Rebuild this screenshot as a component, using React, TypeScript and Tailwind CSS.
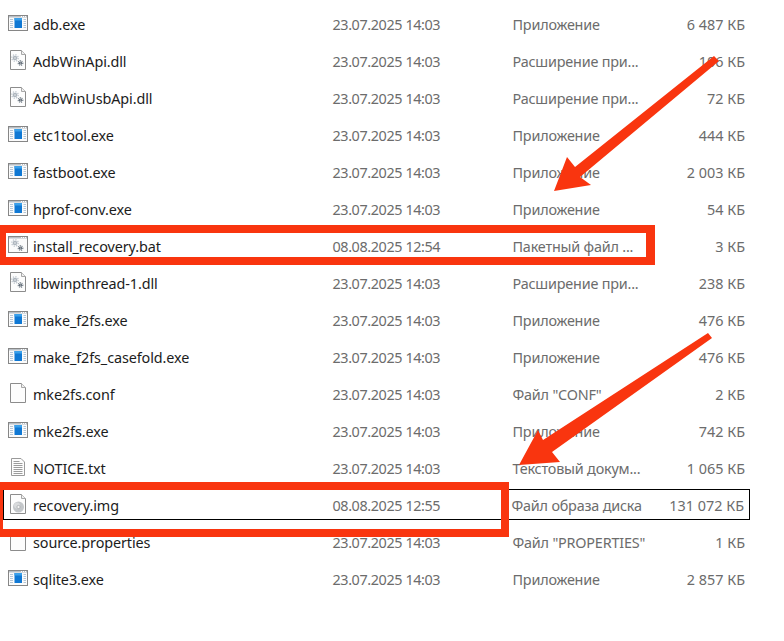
type Kind = "exe" | "dll" | "bat" | "conf" | "txt" | "img";
type Row = { name: string; date: string; type: string; size: string; icon: Kind; selected?: boolean };

const D = "23.07.2025 14:03";
const rows: Row[] = [
  { name: "adb.exe", date: D, type: "Приложение", size: "6 487 КБ", icon: "exe" },
  { name: "AdbWinApi.dll", date: D, type: "Расширение при...", size: "106 КБ", icon: "dll" },
  { name: "AdbWinUsbApi.dll", date: D, type: "Расширение при...", size: "72 КБ", icon: "dll" },
  { name: "etc1tool.exe", date: D, type: "Приложение", size: "444 КБ", icon: "exe" },
  { name: "fastboot.exe", date: D, type: "Приложение", size: "2 003 КБ", icon: "exe" },
  { name: "hprof-conv.exe", date: D, type: "Приложение", size: "54 КБ", icon: "exe" },
  { name: "install_recovery.bat", date: "08.08.2025 12:54", type: "Пакетный файл ...", size: "3 КБ", icon: "bat" },
  { name: "libwinpthread-1.dll", date: D, type: "Расширение при...", size: "238 КБ", icon: "dll" },
  { name: "make_f2fs.exe", date: D, type: "Приложение", size: "476 КБ", icon: "exe" },
  { name: "make_f2fs_casefold.exe", date: D, type: "Приложение", size: "476 КБ", icon: "exe" },
  { name: "mke2fs.conf", date: D, type: 'Файл "CONF"', size: "2 КБ", icon: "conf" },
  { name: "mke2fs.exe", date: D, type: "Приложение", size: "742 КБ", icon: "exe" },
  { name: "NOTICE.txt", date: D, type: "Текстовый докум...", size: "1 065 КБ", icon: "txt" },
  { name: "recovery.img", date: "08.08.2025 12:55", type: "Файл образа диска", size: "131 072 КБ", icon: "img", selected: true },
  { name: "source.properties", date: D, type: 'Файл "PROPERTIES"', size: "1 КБ", icon: "conf" },
  { name: "sqlite3.exe", date: D, type: "Приложение", size: "2 857 КБ", icon: "exe" },
];

function Gears() {
  return (
    <g>
      <circle cx="9" cy="9" r="3.2" fill="none" stroke="#c3cad1" strokeWidth="1.4" strokeDasharray="1.3 1.2" />
      <circle cx="9" cy="9" r="2.3" fill="#aeb6be" />
      <circle cx="9" cy="9" r="0.8" fill="#eef0f2" />
      <circle cx="14.5" cy="14" r="2.3" fill="none" stroke="#6f7a85" strokeWidth="1.2" strokeDasharray="1 0.8" />
      <circle cx="14.5" cy="14" r="1.6" fill="#59646f" />
      <circle cx="14.5" cy="14" r="0.5" fill="#e6e8ea" />
    </g>
  );
}

function Page({ children }: { children?: React.ReactNode }) {
  return (
    <>
      <path d="M4.5 1.500H15.500L19.500 5.500V20.500H4.500Z" fill="#fdfdfd" stroke="#8c8c8c" strokeWidth="1" />
      <path d="M15.500 1.500V5.500H19.500" fill="#f0f0f0" stroke="#a8a8a8" strokeWidth="1" />
      {children}
    </>
  );
}

function FileIcon({ kind }: { kind: Kind }) {
  let body: React.ReactNode = null;
  if (kind === "exe") {
    body = (
      <>
        <rect x="2.500" y="3.500" width="19" height="15" fill="#fbfbfb" stroke="#868686" />
        <rect x="3" y="4" width="18" height="1.500" fill="#b9c0c6" />
        <path d="M15 4.500h1M17 4.500h1M19 4.500h1" stroke="#ffffff" strokeWidth="1" />
        <path d="M4 7.500h3M4 9.500h3M4 11.500h3M4 13.500h3M4 15.500h3M17.500 7.500h2.500M17.500 9.500h2.500M17.500 11.500h2.500M17.500 13.500h2.500M17.500 15.500h2.500" stroke="#b4c6d6" strokeWidth="1" />
        <rect x="8.500" y="6" width="7.500" height="10" fill="#0f78d4" />
        <rect x="8.500" y="6" width="7.500" height="2.500" fill="#3aa0ea" />
      </>
    );
  } else if (kind === "dll") {
    body = (
      <Page>
        <Gears />
      </Page>
    );
  } else if (kind === "bat") {
    body = (
      <>
        <rect x="2.500" y="2.500" width="19" height="16" fill="#fbfbfb" stroke="#868686" />
        <rect x="3" y="3" width="18" height="1.500" fill="#b9c0c6" />
        <path d="M15 3.500h1M17 3.500h1M19 3.500h1" stroke="#ffffff" strokeWidth="1" />
        <Gears />
      </>
    );
  } else if (kind === "conf") {
    body = <Page />;
  } else if (kind === "txt") {
    body = (
      <>
        <path d="M5.500 2.500H15L18.500 6V19.500H5.500Z" fill="#fdfdfd" stroke="#9a9a9a" />
        <path d="M7.500 5.500h6M7.500 7.500h9M7.500 9.500h9M7.500 11.500h9M7.500 13.500h9M7.500 15.500h9M7.500 17.500h9" stroke="#9c9c9c" strokeWidth="1" />
      </>
    );
  } else {
    body = (
      <Page>
        <circle cx="12.500" cy="14" r="5.500" fill="#c4c7ca" />
        <circle cx="11" cy="12.500" r="3" fill="#d9dbdd" />
        <circle cx="12.500" cy="14" r="1.600" fill="#f4f4f4" stroke="#9b9ea1" strokeWidth="0.600" />
      </Page>
    );
  }
  return (
    <svg width="24" height="24" viewBox="0 0 24 24" className="shrink-0">
      {body}
    </svg>
  );
}

export default function App() {
  return (
    <div className="relative w-[784px] h-[641px] overflow-hidden bg-white text-[14.4px] font-['Noto_Sans','Open_Sans',sans-serif]">
      <div className="flex flex-col gap-[6px] pt-[8px] pl-[3px]">
        {rows.map((r) => (
          <div
            key={r.name}
            className={`flex items-center h-[31px] w-[747px] border ${r.selected ? "border-black" : "border-transparent"}`}
          >
            <div className="w-[29px] pl-[2px] pt-[1px] flex shrink-0">
              <FileIcon kind={r.icon} />
            </div>
            <div className="w-[299.5px] pt-[2px] shrink-0 text-[#1c1c1c] tracking-[-0.1px] whitespace-nowrap">{r.name}</div>
            <div className="w-[180px] pt-[2px] shrink-0 text-[#6c6c6c] tracking-[-0.4px] whitespace-nowrap">{r.date}</div>
            <div className={`${r.selected ? "w-[139.5px] -ml-[1px]" : "w-[140.5px]"} pt-[2px] shrink-0 text-[#6c6c6c] tracking-[-0.2px] whitespace-nowrap`}>{r.type}</div>
            <div className={`${r.selected ? "w-[93px]" : "w-[92px]"} pt-[2px] shrink-0 text-right text-[#6c6c6c] whitespace-nowrap`}>{r.size}</div>
          </div>
        ))}
      </div>

      <div className="absolute left-0 top-[225px] w-[655px] h-[40px] border-[#f9350f] border-t-[8px] border-r-[9px] border-b-[8px] border-l-[6px]" />
      <div className="absolute left-0 top-[482px] w-[509px] h-[55px] border-[#f9350f] border-t-[8px] border-r-[8px] border-b-[8px] border-l-[3px]" />

      <svg className="absolute left-0 top-0 pointer-events-none" width="784" height="641" viewBox="0 0 784 641">
        <polygon points="714,56 719,61 580,177 591,185 554,191 567,157 575,167" fill="#f9350f" />
        <polygon points="708,333 712,338 552,452 560,462 519,465 538,430 543,440" fill="#f9350f" />
      </svg>
    </div>
  );
}
